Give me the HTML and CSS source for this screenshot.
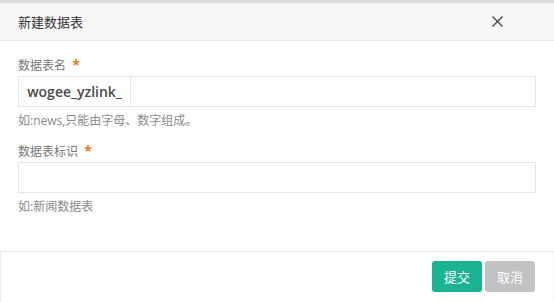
FILE: index.html
```html
<!DOCTYPE html>
<html lang="zh-CN">
<head>
    <meta charset="UTF-8">
    <title>新建数据表</title>
    <link rel="stylesheet" href="styles.css">
</head>
<body>
    <div class="modal">
        <div class="modal-header">
            <h4 class="modal-title">新建数据表</h4>
            <button class="close">
                <svg width="11" height="11" viewBox="0 0 11 11"><path d="M0.5 0.5L10.5 10.5M10.5 0.5L0.5 10.5" stroke="#444" stroke-width="1.3"/></svg>
            </button>
        </div>
        <div class="modal-body">
            <div class="form-group">
                <label class="form-label">数据表名 <span class="req">*</span></label>
                <div class="input-group">
                    <span class="addon">wogee_yzlink_</span>
                    <input class="form-control" type="text">
                </div>
                <div class="help">如:news,只能由字母、数字组成。</div>
            </div>
            <div class="form-group">
                <label class="form-label">数据表标识 <span class="req">*</span></label>
                <input class="form-control" type="text">
                <div class="help">如:新闻数据表</div>
            </div>
        </div>
        <div class="modal-footer">
            <button class="btn btn-primary">提交</button>
            <button class="btn btn-gray">取消</button>
        </div>
    </div>
</body>
</html>
```

FILE: styles.css
```css
* {
    margin: 0;
    padding: 0;
    box-sizing: border-box;
}

body {
    font-family: "Open Sans", "Noto Sans CJK SC", sans-serif;
    background: #fff;
    color: #676a6c;
    font-size: 12px;
}

.modal {
    width: 554px;
    height: 302px;
    border-top: 3px solid #dcdcdc;
    display: flex;
    flex-direction: column;
}

.modal-header {
    height: 38px;
    background: #f7f7f7;
    border-bottom: 1px solid #e5e5e5;
    display: flex;
    align-items: center;
    justify-content: space-between;
    padding: 0 51px 0 18px;
}

.modal-title {
    font-size: 13px;
    font-weight: normal;
    color: #333;
}

.close {
    border: none;
    background: none;
    display: flex;
    cursor: pointer;
}

.modal-body {
    height: 210px;
    padding: 15px 18px 0 18px;
}

.form-group {
    margin-bottom: 13px;
}

.form-label {
    display: block;
    font-size: 12px;
    color: #777;
    height: 20px;
    line-height: 18px;
}

.req {
    color: #f5741f;
    font-size: 14px;
    font-weight: bold;
    margin-left: 3px;
}

.input-group {
    display: flex;
}

.addon {
    width: 112px;
    height: 31px;
    border: 1px solid #e5e6e7;
    border-right: none;
    font-size: 14px;
    font-weight: 600;
    color: #4a4a4a;
    display: flex;
    align-items: center;
    justify-content: center;
}

.form-control {
    display: block;
    width: 100%;
    height: 31px;
    border: 1px solid #e5e6e7;
    outline: none;
    font: inherit;
}

.input-group .form-control {
    flex: 1;
}

.help {
    margin-top: 6px;
    font-size: 12px;
    color: #8a8a8a;
    line-height: 16px;
}

.modal-footer {
    flex: 1;
    border-top: 1px solid #e5e5e5;
    border-left: 1px solid #eee;
    border-right: 1px solid #eee;
    display: flex;
    justify-content: flex-end;
    align-items: flex-start;
    gap: 3px;
    padding: 9px 18px 0 0;
}

.btn {
    width: 50px;
    height: 31px;
    border: none;
    border-radius: 3px;
    color: #fff;
    font-family: inherit;
    font-size: 13px;
    cursor: pointer;
}

.btn-primary {
    background: #1ab394;
}

.btn-gray {
    background: #c2c2c2;
}
```
